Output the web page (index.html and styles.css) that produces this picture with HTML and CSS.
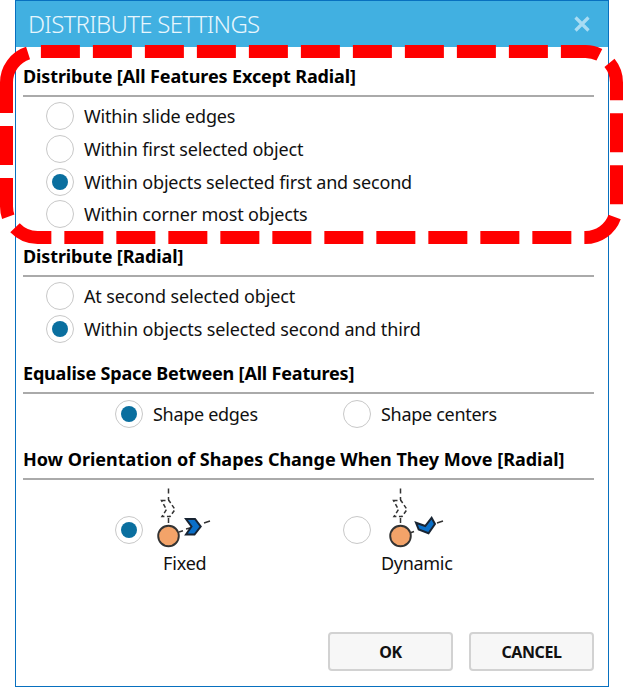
FILE: index.html
```html
<!DOCTYPE html>
<html lang="en">
<head>
<meta charset="utf-8">
<title>Distribute Settings</title>
<link rel="stylesheet" href="styles.css">
</head>
<body>
<main class="dialog">
  <header class="titlebar">
    <h1>DISTRIBUTE SETTINGS</h1>
    <svg class="close" width="18" height="18" viewBox="0 0 18 18"><path d="M2.500 2.500 15.500 15.500M15.500 2.500 2.500 15.500"/></svg>
  </header>
  <section class="group general">
    <h2>Distribute [All Features Except Radial]</h2>
    <div class="options">
      <label class="option"><i class="radio"></i><span>Within slide edges</span></label>
      <label class="option"><i class="radio"></i><span>Within first selected object</span></label>
      <label class="option"><i class="radio checked"></i><span>Within objects selected first and second</span></label>
      <label class="option"><i class="radio"></i><span>Within corner most objects</span></label>
    </div>
  </section>
  <section class="group radial">
    <h2>Distribute [Radial]</h2>
    <div class="options">
      <label class="option"><i class="radio"></i><span>At second selected object</span></label>
      <label class="option"><i class="radio checked"></i><span>Within objects selected second and third</span></label>
    </div>
  </section>
  <section class="group spacing">
    <h2>Equalise Space Between [All Features]</h2>
    <div class="pair">
      <label class="option"><i class="radio checked"></i><span>Shape edges</span></label>
      <label class="option"><i class="radio"></i><span>Shape centers</span></label>
    </div>
  </section>
  <section class="group orientation">
    <h2>How Orientation of Shapes Change When They Move [Radial]</h2>
    <div class="pair">
      <label class="option">
        <i class="radio checked"></i>
        <span class="figure">
          <svg width="60" height="62" viewBox="0 0 60 62">
            <path class="dash" d="M14.500 2.500v5M14.500 11v3M14.500 32v5M25 46l4-1.200M32 43l4-1M50 37l6-2"/>
            <path class="ghost" d="M7.500 14.500h7.500l6 9-5 7h-8l4.500-7z"/>
            <circle class="orb" cx="14.500" cy="50" r="10.300"/>
            <path class="chevron" d="M32 33h9l5.700 7.500-6.200 8h-8.500l5.500-8z"/>
          </svg>
          <span>Fixed</span>
        </span>
      </label>
      <label class="option">
        <i class="radio"></i>
        <span class="figure dynamic">
          <svg width="60" height="62" viewBox="0 0 60 62">
            <path class="dash" d="M14.500 2.500v5M14.500 11v3M14.500 32v5M24 47l4-1.500M51 37l6-2"/>
            <path class="ghost" d="M7.500 14.500h7.500l6 9-5 7h-8l4.500-7z"/>
            <circle class="orb" cx="14.500" cy="50" r="10.300"/>
            <path class="chevron" d="M30 36.700l9.200 3.300 6.400-8.200 3.400 6.200-6.500 9.300-9.800-3.800z"/>
          </svg>
          <span>Dynamic</span>
        </span>
      </label>
    </div>
  </section>
  <footer class="actions">
    <button class="ok">OK</button>
    <button class="cancel">CANCEL</button>
  </footer>
</main>
<svg class="highlight" width="623" height="687" viewBox="0 0 623 687">
  <path d="M6.500 82.500A31 31 0 0 1 37.500 51.500H585.500A31 31 0 0 1 616.500 82.500V206.500A31 31 0 0 1 585.500 237.500H37.500A31 31 0 0 1 6.500 206.500Z"/>
</svg>
</body>
</html>
```
FILE: styles.css
```css
* { box-sizing: border-box; }
body {
  margin: 0;
  background: #fff;
  color: #111;
  font: 18px/24px "Noto Sans", "Open Sans", sans-serif;
}
.dialog {
  display: flex;
  flex-direction: column;
  width: 594px;
  height: 687px;
  margin-left: 15px;
  border: 1px solid #0870bf;
}
.titlebar {
  display: flex;
  flex: none;
  align-items: center;
  justify-content: space-between;
  height: 46px;
  padding: 0 17px 0 12px;
  background: #41b0e1;
  color: #e7f6fd;
}
h1 {
  margin: 0;
  font-size: 24px;
  font-weight: 350;
  letter-spacing: -0.7px;
  white-space: nowrap;
}
.close path { stroke: #a9dcf3; stroke-width: 3.200; fill: none; }
.group { flex: none; padding: 0 14px 0 7px; }
.general { height: 197px; padding-top: 17px; }
.radial { height: 117px; }
.spacing { height: 86px; }
.orientation { height: 185px; }
h2 {
  height: 33px;
  margin: 0;
  border-bottom: 2px solid #aaa;
  font-size: 18px;
  line-height: 24px;
  font-weight: 700;
  letter-spacing: -0.12px;
  white-space: nowrap;
  color: #000;
}
.spacing h2 { letter-spacing: -0.18px; }
.orientation h2 { letter-spacing: -0.02px; }
.options { padding: 3px 0 0 23px; }
.option {
  display: flex;
  align-items: center;
  gap: 10px;
  height: 32.700px;
  letter-spacing: -0.17px;
  white-space: nowrap;
}
.radial .option { letter-spacing: -0.13px; }
.spacing .option { letter-spacing: -0.3px; }
.radio {
  display: grid;
  flex: none;
  place-items: center;
  width: 28px;
  height: 28px;
  border: 1.500px solid #c8c8c8;
  border-radius: 50%;
}
.checked::before {
  content: "";
  width: 16px;
  height: 16px;
  border-radius: 50%;
  background: #0a6f9f;
}
.pair {
  display: grid;
  grid-template-columns: 228px 228px;
  padding: 4px 0 0 92px;
}
.orientation .option { height: 100px; align-items: flex-start; }
.orientation .radio { margin-top: 32px; }
.figure { display: flex; flex-direction: column; margin: 2px 0 0 1px; }
.figure svg { margin-bottom: 3px; }
.figure > span { margin-left: 9px; }
.dynamic { margin-left: 0; }
.dynamic svg { margin-left: 5px; }
.dynamic > span { margin-left: 0; letter-spacing: -0.3px; }
.dash, .ghost { fill: none; stroke: #333; stroke-width: 1.500; }
.ghost { stroke-dasharray: 4 2.500; }
.orb { fill: #f3a369; stroke: #333; stroke-width: 1.900; }
.chevron { fill: #0a6fc8; stroke: #182433; stroke-width: 2; }
.actions { display: flex; gap: 16px; padding-left: 312px; }
button {
  width: 125px;
  height: 39px;
  padding: 0;
  border: 2px solid #d2d2d2;
  border-radius: 4px;
  background: #f7f7f7;
  color: #111;
  font: 700 16px/24px "Noto Sans", sans-serif;
  letter-spacing: -0.4px;
}
.highlight { position: absolute; left: 0; top: 0; pointer-events: none; }
.highlight path { fill: none; stroke: #f00; stroke-width: 13; stroke-dasharray: 39 13; }
```
